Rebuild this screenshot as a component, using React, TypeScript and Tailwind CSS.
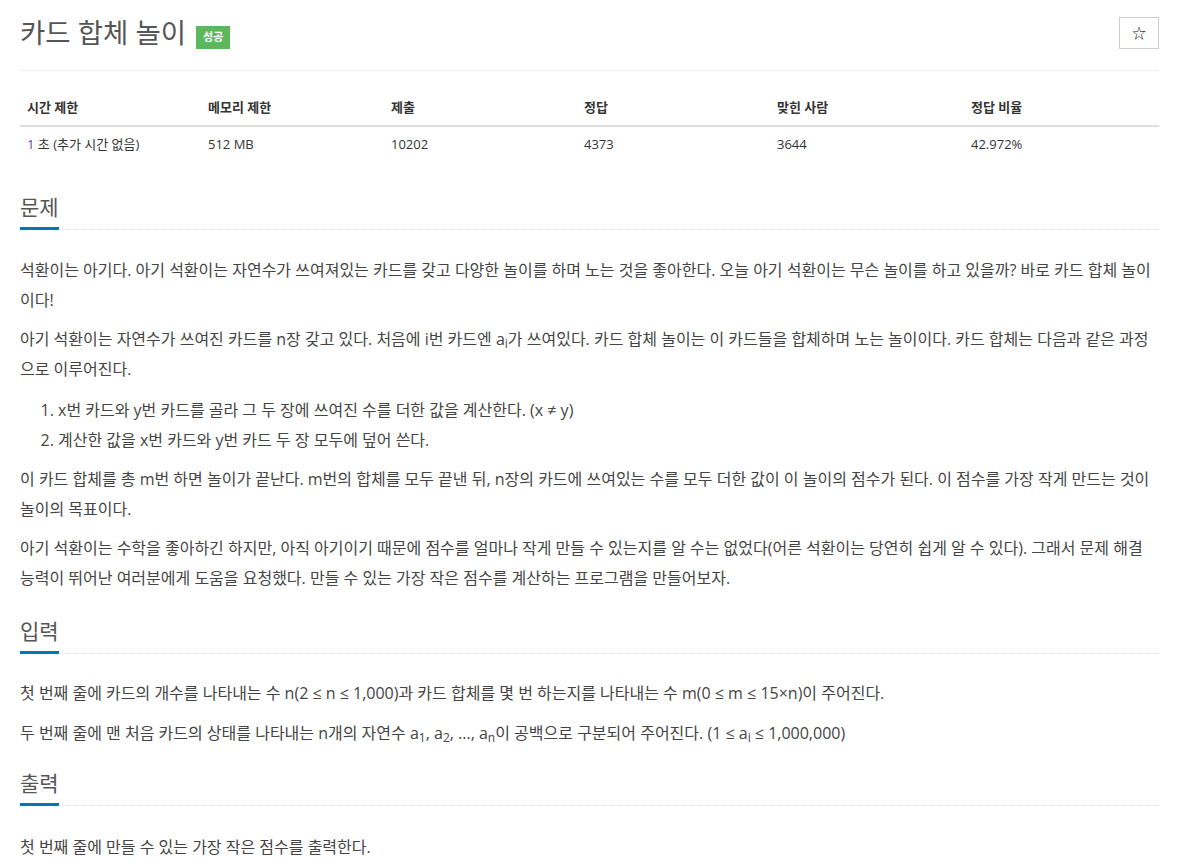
import React from "react";

const FONT = { fontFamily: '"Open Sans", "Noto Sans CJK KR", sans-serif' };

function Heading({ children }: { children: React.ReactNode }) {
  return (
    <h2 className="flex border-b border-dotted border-[#e0e0e0]">
      <span className="-mb-px border-b-[3px] border-[#0076c0] pb-[9px] text-[21px] leading-[22px] text-[#555]">
        {children}
      </span>
    </h2>
  );
}

export default function App() {
  const headers = ["시간 제한", "메모리 제한", "제출", "정답", "맞힌 사람", "정답 비율"];
  return (
    <div className="min-h-screen bg-white pl-[20px] pr-[30px]" style={FONT}>
      <div className="flex items-center justify-between pt-[16px]">
        <div className="flex items-center">
          <h1 className="text-[27.5px] leading-[32px] text-[#555]">카드 합체 놀이</h1>
          <span className="ml-[10px] mt-[10px] flex h-[23px] items-center bg-[#5cb85c] px-[7px] text-[11px] font-bold text-white">
            성공
          </span>
        </div>
        <button className="flex h-[32px] w-[40px] items-center justify-center border border-[#ccc] bg-white text-[14px] text-[#222]">
          ☆
        </button>
      </div>
      <div className="mt-[21px] border-b border-[#eee]" />

      <div className="mt-[19px] text-[13px] leading-[1.42857] text-[#333]">
        <div className="grid grid-cols-[181px_183px_193px_193px_194px_1fr] border-b-2 border-[#ddd] font-bold">
          {headers.map((h) => (
            <div key={h} className="py-[8px] pl-[7px] pr-[8px]">
              {h}
            </div>
          ))}
        </div>
        <div className="grid grid-cols-[181px_183px_193px_193px_194px_1fr]">
          <div className="py-[8px] pl-[7px] pr-[8px]">
            <span className="text-[#6a3d9a]">1</span> 초 (추가 시간 없음)
          </div>
          <div className="py-[8px] pl-[7px] pr-[8px]">512 MB</div>
          <div className="py-[8px] pl-[7px] pr-[8px]">10202</div>
          <div className="py-[8px] pl-[7px] pr-[8px]">4373</div>
          <div className="py-[8px] pl-[7px] pr-[8px]">3644</div>
          <div className="py-[8px] pl-[7px] pr-[8px]">42.972%</div>
        </div>
      </div>

      <section className="mt-[35px]">
        <Heading>문제</Heading>
        <div className="mt-[25px] text-[16px] leading-[30px] text-[#444]">
          <p className="mb-[9px]">
            석환이는 아기다. 아기 석환이는 자연수가 쓰여져있는 카드를 갖고 다양한 놀이를 하며 노는 것을 좋아한다. 오늘 아기 석환이는 무슨 놀이를 하고 있을까? 바로 카드 합체 놀이이다!
          </p>
          <p className="mb-[9px]">
            아기 석환이는 자연수가 쓰여진 카드를 n장 갖고 있다. 처음에 i번 카드엔 a<sub>i</sub>가 쓰여있다. 카드 합체 놀이는 이 카드들을 합체하며 노는 놀이이다. 카드 합체는 다음과 같은 과정으로 이루어진다.
          </p>
          <ol className="mb-[9px] mt-[12px] list-decimal pl-[38px] leading-[29.5px]">
            <li>x번 카드와 y번 카드를 골라 그 두 장에 쓰여진 수를 더한 값을 계산한다. (x ≠ y)</li>
            <li>계산한 값을 x번 카드와 y번 카드 두 장 모두에 덮어 쓴다.</li>
          </ol>
          <p className="mb-[9px]">
            이 카드 합체를 총 m번 하면 놀이가 끝난다. m번의 합체를 모두 끝낸 뒤, n장의 카드에 쓰여있는 수를 모두 더한 값이 이 놀이의 점수가 된다. 이 점수를 가장 작게 만드는 것이 놀이의 목표이다.
          </p>
          <p className="mb-[9px]">
            아기 석환이는 수학을 좋아하긴 하지만, 아직 아기이기 때문에 점수를 얼마나 작게 만들 수 있는지를 알 수는 없었다(어른 석환이는 당연히 쉽게 알 수 있다). 그래서 문제 해결 능력이 뛰어난 여러분에게 도움을 요청했다. 만들 수 있는 가장 작은 점수를 계산하는 프로그램을 만들어보자.
          </p>
        </div>
      </section>

      <section className="mt-[27px]">
        <Heading>입력</Heading>
        <div className="mt-[24px] text-[16px] leading-[30px] text-[#444]">
          <p className="mb-[10px]">
            첫 번째 줄에 카드의 개수를 나타내는 수 n(2 ≤ n ≤ 1,000)과 카드 합체를 몇 번 하는지를 나타내는 수 m(0 ≤ m ≤ 15×n)이 주어진다.
          </p>
          <p className="mb-[9px]">
            두 번째 줄에 맨 처음 카드의 상태를 나타내는 n개의 자연수 a<sub>1</sub>, a<sub>2</sub>, ..., a<sub>n</sub>이 공백으로 구분되어 주어진다. (1 ≤ a<sub>i</sub> ≤ 1,000,000)
          </p>
        </div>
      </section>

      <section className="mt-[24px]">
        <Heading>출력</Heading>
        <div className="mt-[26px] text-[16px] leading-[30px] text-[#444]">
          <p className="mb-[9px]">첫 번째 줄에 만들 수 있는 가장 작은 점수를 출력한다.</p>
        </div>
      </section>
    </div>
  );
}
